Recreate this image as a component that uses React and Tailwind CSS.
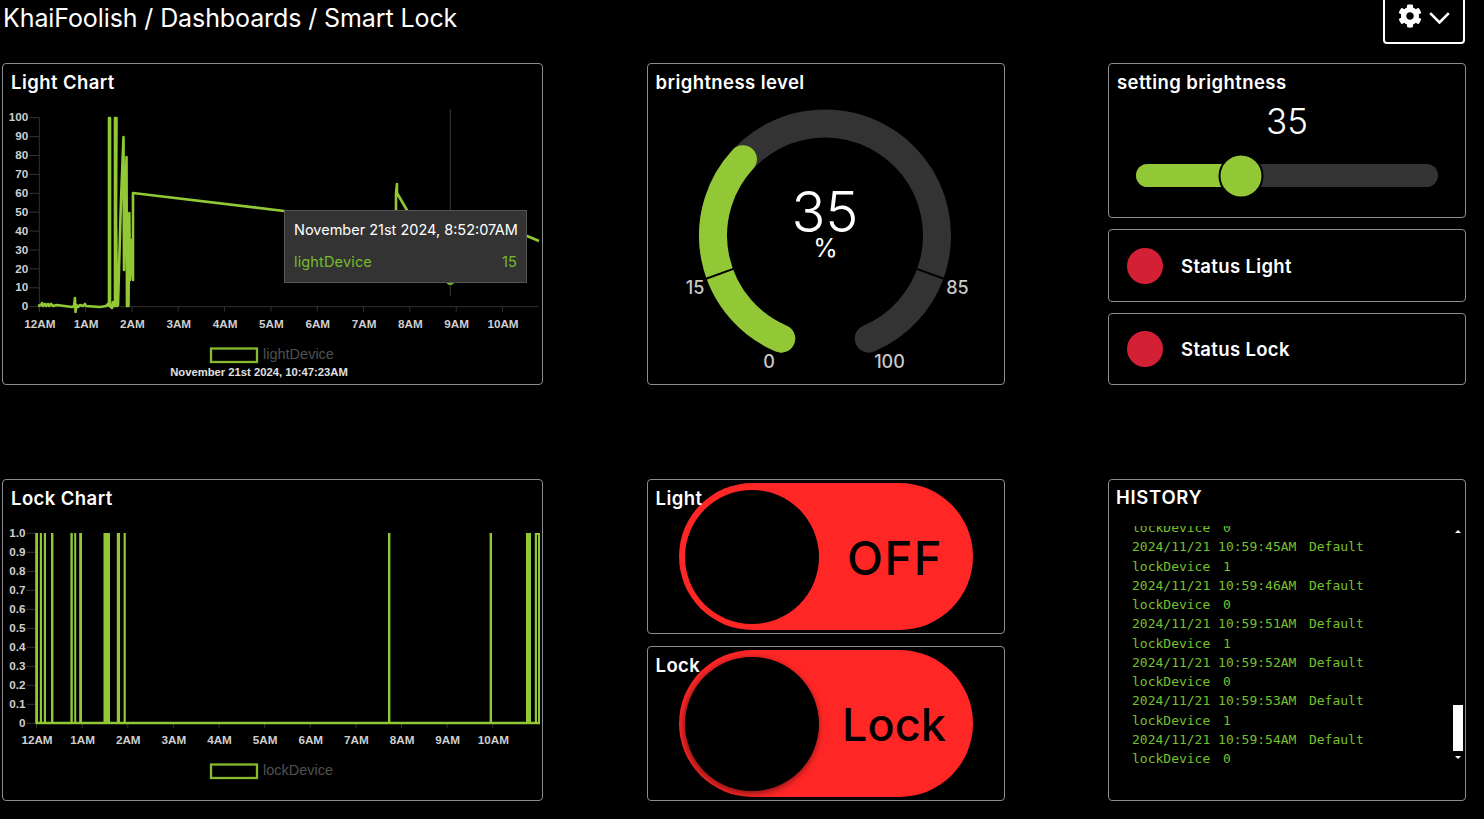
import React from "react";
import { FaCog } from "react-icons/fa";

const GREEN = "#92c836";
const ARIAL = "'Liberation Sans', Arial, sans-serif";

function Card({ className = "", children }) {
  return (
    <div className={"relative rounded-[4px] border border-[#8c8c8c] bg-black overflow-hidden " + className}>
      {children}
    </div>
  );
}

function Title({ children }) {
  return (
    <div className="h-[36px] pl-[8px] pt-[4.5px] text-[18.5px] leading-[26px] font-semibold tracking-[0.42px] text-white">{children}</div>
  );
}

const lightLine =
  "38,306 41,305 42,303 43,306 45,304 46,306 48,304 49,306 51,304 53,306 57,305 72,307 74,306 75,298 75.5,312 76.5,305 78,307 80,305 83,306 85,304 86,306 100,307 106,306 108,304 109,306 109,118 110,118 110,306 112,308 113,302 114,306 115,306 115,118 116.5,118 116,213 117,306 118,305 119,270 121,200 123.5,137 124,270 125,210 126.5,157 127,306 128.5,306 129.3,213 130,280 131.5,240 133,280 133,193 284,211 396,224 396,193 397,184 397,193 408,212 450,282 480,225 527,236 539,241";

const xLabels = ["12AM", "1AM", "2AM", "3AM", "4AM", "5AM", "6AM", "7AM", "8AM", "9AM", "10AM"];

function Axis({ x0, step, y0, yTop, yLabels, endX, labelDy }) {
  const n = yLabels.length - 1;
  return (
    <g fontFamily={ARIAL} fontWeight="700" fontSize="11.7" fill="#cfcfcf">
      <line x1={x0} y1={yTop} x2={x0} y2={y0 + 5} stroke="#333" />
      <line x1={x0} y1={y0} x2={endX} y2={y0} stroke="#333" />
      {yLabels.map((l, i) => {
        const y = y0 - ((y0 - yTop) * i) / n;
        return (
          <g key={l}>
            <line x1={x0 - 10} x2={x0} y1={y} y2={y} stroke="#333" />
            <text x={x0 - 11} y={y + 3.6} textAnchor="end">{l}</text>
          </g>
        );
      })}
      {xLabels.map((l, i) => {
        const x = x0 + step * i;
        return (
          <g key={l}>
            <line x1={x} x2={x} y1={y0} y2={y0 + 5} stroke="#333" />
            <text x={x + 0.5} y={y0 + labelDy} textAnchor="middle">{l}</text>
          </g>
        );
      })}
    </g>
  );
}

function Legend({ y, label }) {
  return (
    <g>
      <rect x="211" y={y} width="46" height="13.5" fill="none" stroke="#86bb2f" strokeWidth="2.3" />
      <text x="263" y={y + 10.5} fontFamily={ARIAL} fontSize="14.5" fill="#505050">{label}</text>
    </g>
  );
}

function LightChart() {
  return (
    <Card className="h-[322px]">
      <Title>Light Chart</Title>
      <svg viewBox="3 100 539 284" className="block w-[539px] h-[284px]">
        <Axis
          x0={39.3}
          step={46.32}
          y0={306.7}
          yTop={117.7}
          endX={539}
          labelDy={21.5}
          yLabels={["0", "10", "20", "30", "40", "50", "60", "70", "80", "90", "100"]}
        />
        <line x1="450.3" x2="450.3" y1="109" y2="296" stroke="#3a3a3a" />
        <polyline points={lightLine} fill="none" stroke={GREEN} strokeWidth="2.6" strokeLinejoin="round" />
        <circle cx="450.3" cy="281" r="4" fill="#7fae30" />
        <Legend y={348.5} label="lightDevice" />
        <text x="259" y="376" textAnchor="middle" fontFamily={ARIAL} fontWeight="700" fontSize="11.25" fill="#e0e0e0">
          November 21st 2024, 10:47:23AM
        </text>
      </svg>
      <div className="absolute left-[281px] top-[146px] w-[243px] h-[73px] bg-[#333333] border border-[#555555] px-[9px] pt-[8px] text-[14.5px] leading-[22px]">
        <div className="text-white whitespace-nowrap">November 21st 2024, 8:52:07AM</div>
        <div className="flex justify-between mt-[10px] tracking-[0.15px] text-[#78bb2c]">
          <span>lightDevice</span>
          <span>15</span>
        </div>
      </div>
    </Card>
  );
}

const lockBars = [
  [35.2, 38], [39.8, 42], [43.8, 46], [51, 53.4], [70.4, 72.8], [74.2, 76.2], [79.2, 82],
  [103.5, 110], [116.8, 120], [123.6, 125.8], [388, 390.4], [489.6, 492], [526, 531],
  [534.8, 537], [538, 540],
];

function LockChart() {
  return (
    <Card className="h-[322px]">
      <Title>Lock Chart</Title>
      <svg viewBox="3 516 539 284" className="block w-[539px] h-[284px]">
        <Axis
          x0={36.5}
          step={45.63}
          y0={723.3}
          yTop={533.3}
          endX={540}
          labelDy={20.7}
          yLabels={["0", "0.1", "0.2", "0.3", "0.4", "0.5", "0.6", "0.7", "0.8", "0.9", "1.0"]}
        />
        <line x1="35.5" x2="540" y1="723" y2="723" stroke={GREEN} strokeWidth="2.6" />
        {lockBars.map(([a, b]) => (
          <rect key={a} x={a} y="533" width={b - a} height="190" fill={GREEN} />
        ))}
        <rect x="535" y="533" width="5" height="2" fill={GREEN} />
        <Legend y={764.5} label="lockDevice" />
      </svg>
    </Card>
  );
}

function polar(deg, r) {
  const a = (deg * Math.PI) / 180;
  return [825 + Math.sin(a) * r, 235.5 - Math.cos(a) * r];
}

function arc(a1, a2, r) {
  const [x1, y1] = polar(a1, r);
  const [x2, y2] = polar(a2, r);
  const large = a2 - a1 > 180 ? 1 : 0;
  return `M${x1} ${y1} A${r} ${r} 0 ${large} 1 ${x2} ${y2}`;
}

function Gauge() {
  const start = 203;
  const end = 517;
  const val = start + (end - start) * 0.35;
  const t1 = polar(250, 97.5);
  const t2 = polar(250, 126.5);
  const t3 = polar(470, 97.5);
  const t4 = polar(470, 126.5);
  const UI = "Inter, sans-serif";
  return (
    <Card className="h-[322px]">
      <Title>brightness level</Title>
      <svg viewBox="648 100 356 284" className="block w-[356px] h-[284px]">
        <path d={arc(start, end, 112)} fill="none" stroke="#333333" strokeWidth="28" strokeLinecap="round" />
        <path d={arc(start, val, 112)} fill="none" stroke={GREEN} strokeWidth="28" strokeLinecap="round" />
        <line x1={t1[0]} y1={t1[1]} x2={t2[0]} y2={t2[1]} stroke="#000" strokeWidth="2" />
        <line x1={t3[0]} y1={t3[1]} x2={t4[0]} y2={t4[1]} stroke="#000" strokeWidth="2" />
        <g fontFamily={UI} textAnchor="middle">
          <text x="825" y="232" fontSize="56" fontWeight="300" fill="#fff">35</text>
          <text x="825.5" y="257" fontSize="25" fontWeight="400" fill="#fff">%</text>
          <g fontSize="18" fontWeight="500" fill="#c8c8c8">
            <text x="695" y="294">15</text>
            <text x="957.5" y="294">85</text>
            <text x="769" y="368">0</text>
            <text x="889.5" y="368">100</text>
          </g>
        </g>
      </svg>
    </Card>
  );
}

function Toggle({ label, text, shadow, spaced }) {
  return (
    <Card className="h-[155px] flex items-center justify-center">
      <div className="absolute left-[8px] top-[4.5px] z-10 text-[18.5px] leading-[26px] font-semibold tracking-[0.42px] text-white">{label}</div>
      <div className="w-[294px] h-[147px] rounded-full bg-[#ff2626] flex items-center pl-[6px] pr-[7px]">
        <div className={"w-[134px] h-[134px] rounded-full bg-black shrink-0 " + (shadow ? "shadow-[-1px_2px_7px_rgba(0,0,0,0.55)]" : "")} />
        <div className={"flex-1 pt-[2px] text-center leading-none font-medium text-black " + (spaced ? "pl-[6px] text-[47px] tracking-[1.5px]" : "pl-[4px] text-[45px]")}>{text}</div>
      </div>
    </Card>
  );
}

function Slider() {
  return (
    <Card className="h-[155px]">
      <Title>setting brightness</Title>
      <div className="h-[42px] text-center text-[35px] leading-[42px] font-light text-white">35</div>
      <div className="relative mt-[22px] mx-auto w-[302px] h-[23px] rounded-full bg-[#333333]">
        <div className="w-[35%] h-full rounded-l-full bg-[#92c836]" />
        <div className="absolute left-[34.8%] top-1/2 -translate-x-1/2 -translate-y-1/2 w-[45px] h-[45px] rounded-full bg-[#92c836] border-2 border-black" />
      </div>
    </Card>
  );
}

function Status({ label, h }) {
  return (
    <Card className={"flex items-center pl-[18px] gap-[18px] " + h}>
      <div className="w-[36px] h-[36px] rounded-full bg-[#d32035]" />
      <div className="pt-[2px] text-[18.5px] font-semibold tracking-[0.35px] text-white">{label}</div>
    </Card>
  );
}

const historyRows = [
  ["lockDevice", "0"],
  ["2024/11/21 10:59:45AM", "Default"],
  ["lockDevice", "1"],
  ["2024/11/21 10:59:46AM", "Default"],
  ["lockDevice", "0"],
  ["2024/11/21 10:59:51AM", "Default"],
  ["lockDevice", "1"],
  ["2024/11/21 10:59:52AM", "Default"],
  ["lockDevice", "0"],
  ["2024/11/21 10:59:53AM", "Default"],
  ["lockDevice", "1"],
  ["2024/11/21 10:59:54AM", "Default"],
  ["lockDevice", "0"],
];

function History() {
  return (
    <Card className="h-[322px]">
      <div className="h-[36px] pl-[7px] pt-[3.5px] text-[18.5px] leading-[26px] font-semibold tracking-[0.7px] text-white">HISTORY</div>
      <div className="relative mt-[10px] h-[248px] overflow-hidden pl-[23px]">
        <div className="-mt-[8px] font-['DejaVu_Sans_Mono',monospace] text-[13px] leading-[19.25px] text-[#76c02e] whitespace-pre">
          {historyRows.map((r, i) => (
            <div key={i} className="flex gap-[12.6px]">
              <span>{r[0]}</span>
              <span>{r[1]}</span>
            </div>
          ))}
        </div>
        <div className="absolute right-[2px] top-0 bottom-0 w-[10px]">
          <div className="absolute left-[2px] top-[4px] w-0 h-0 border-x-[3px] border-x-transparent border-b-[3px] border-b-white" />
          <div className="absolute left-0 top-[179px] w-[10px] h-[46px] bg-white" />
          <div className="absolute left-[2px] top-[230px] w-0 h-0 border-x-[3px] border-x-transparent border-t-[3px] border-t-white" />
        </div>
      </div>
    </Card>
  );
}

export default function App() {
  return (
    <div className="w-[1484px] h-[819px] overflow-hidden bg-black font-['Inter',sans-serif] text-white">
      <div className="h-[63px] flex justify-between items-start pl-[3px] pr-[19px]">
        <div className="text-[25px] leading-[36px] tracking-[-0.1px]">KhaiFoolish / Dashboards / Smart Lock</div>
        <div className="-mt-[2px] w-[82px] h-[46px] rounded-b-[4px] border-2 border-white flex items-center gap-[7px] pl-[13px] pb-[10px]">
          <FaCog className="w-[24px] h-[24px] text-white shrink-0" />
          <svg width="21" height="12" viewBox="0 0 21 12" className="shrink-0 mt-[4px]">
            <path d="M1.2 1.2 L10.5 10.5 L19.8 1.2" fill="none" stroke="#fff" strokeWidth="2.6" />
          </svg>
        </div>
      </div>
      <div className="ml-[2px] w-[1464px] grid grid-cols-[541px_358px_358px] justify-between gap-y-[94px]">
        <LightChart />
        <Gauge />
        <div className="flex flex-col gap-[11px]">
          <Slider />
          <Status label="Status Light" h="h-[73px]" />
          <Status label="Status Lock" h="h-[72px]" />
        </div>
        <LockChart />
        <div className="flex flex-col gap-[12px]">
          <Toggle label="Light" text="OFF" spaced />
          <Toggle label="Lock" text="Lock" shadow />
        </div>
        <History />
      </div>
    </div>
  );
}
